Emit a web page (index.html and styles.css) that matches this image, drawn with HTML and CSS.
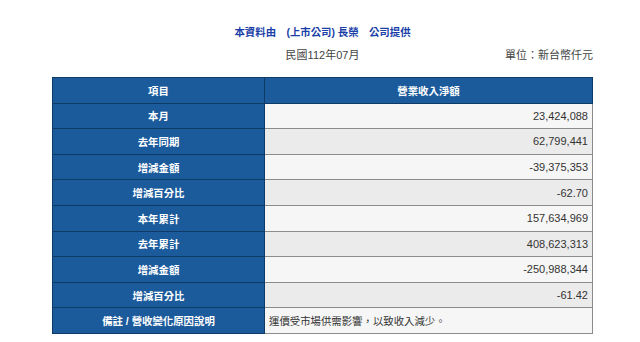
FILE: index.html
```html
<!DOCTYPE html>
<html lang="zh-Hant">
<head>
<meta charset="utf-8">
<link rel="stylesheet" href="styles.css">
</head>
<body>
<div class="page">
  <div class="title">本資料由　(上市公司) 長榮　公司提供</div>
  <div class="meta">
    <span class="period">民國112年07月</span>
    <span class="unit">單位：新台幣仟元</span>
  </div>
  <table class="report">
    <tr><th class="label">項目</th><th class="head">營業收入淨額</th></tr>
    <tr class="odd"><th class="label">本月</th><td class="num">23,424,088</td></tr>
    <tr class="even"><th class="label">去年同期</th><td class="num">62,799,441</td></tr>
    <tr class="odd"><th class="label">增減金額</th><td class="num">-39,375,353</td></tr>
    <tr class="even"><th class="label">增減百分比</th><td class="num">-62.70</td></tr>
    <tr class="odd"><th class="label">本年累計</th><td class="num">157,634,969</td></tr>
    <tr class="even"><th class="label">去年累計</th><td class="num">408,623,313</td></tr>
    <tr class="odd"><th class="label">增減金額</th><td class="num">-250,988,344</td></tr>
    <tr class="even"><th class="label">增減百分比</th><td class="num">-61.42</td></tr>
    <tr class="odd"><th class="label">備註 / 營收變化原因說明</th><td class="note">運價受市場供需影響，以致收入減少。</td></tr>
  </table>
</div>
</body>
</html>
```

FILE: styles.css
```css
html, body {
  margin: 0;
  padding: 0;
  background: #ffffff;
}
body {
  font-family: "Liberation Sans", Arial, "Noto Sans CJK TC", sans-serif;
  font-size: 11px;
  color: #333333;
}
.page {
  width: 541px;
  margin-left: 52px;
  padding-top: 25px;
}
.title {
  text-align: center;
  color: #1a3fa8;
  font-weight: bold;
  font-size: 10.4px;
  line-height: 16px;
}
.meta {
  position: relative;
  height: 16px;
  line-height: 16px;
  margin-top: 6px;
  margin-bottom: 14px;
  display: flex;
  justify-content: center;
}
.period {
  color: #444444;
}
.unit {
  position: absolute;
  right: 0;
  top: 0;
  color: #444444;
}
.report {
  width: 541px;
  border-collapse: collapse;
  table-layout: fixed;
}
.report th, .report td {
  height: 24.6px;
  padding: 0 4px;
  font-size: 11px;
  border: 1px solid #8c8c8c;
}
.report th.label {
  width: 203px;
  background: #1b5a9b;
  color: #ffffff;
  font-weight: bold;
  font-size: 10.4px;
  text-align: center;
  border-color: #0e3a68;
}
.report th.head {
  background: #1b5a9b;
  color: #ffffff;
  font-weight: bold;
  font-size: 10.4px;
  text-align: center;
  border-color: #0e3a68;
}
.report td.num {
  text-align: right;
  color: #333333;
}
.report td.note {
  text-align: left;
  font-size: 10.4px;
  color: #333333;
}
.report tr.odd td {
  background: #f6f6f6;
}
.report tr.even td {
  background: #ebebeb;
}
```
